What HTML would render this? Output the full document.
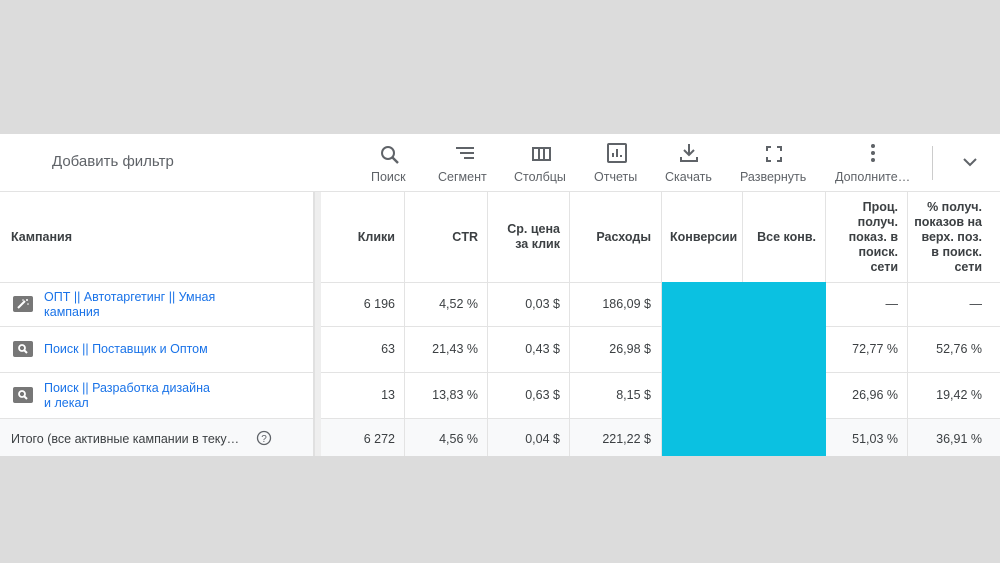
<!DOCTYPE html><html><head><meta charset="utf-8"><style>
body{margin:0;width:1000px;height:563px;background:#dcdcdc;font-family:"Liberation Sans",sans-serif;position:relative;overflow:hidden;color:#3c4043}
.p{position:absolute;left:0;top:134px;width:1000px;height:322px;background:#fff}
.a{position:absolute}
.tb{position:absolute;top:170px;font-size:12.5px;color:#5f6368;text-align:center}
.vl{position:absolute;width:1px;background:#e3e3e3}
.hl{position:absolute;left:0;width:1000px;height:1px;background:#e3e3e3}
.h{position:absolute;font-size:12.5px;font-weight:bold;color:#3c4043;text-align:right;line-height:15px}
.c{position:absolute;font-size:12.5px;color:#3c4043;text-align:right}
.l{position:absolute;font-size:12.5px;color:#1a73e8;line-height:15px}
.ic{position:absolute;left:13px;width:20px;height:16px;background:#777;border-radius:2px}
</style></head><body>
<div class="p"></div>
<div class="a" style="left:52px;top:153px;font-size:15px;color:#5f6368">Добавить фильтр</div>
<svg class="a" style="left:378px;top:143px" width="24" height="24" viewBox="0 0 24 24"><circle cx="10" cy="10" r="6" fill="none" stroke="#5f6368" stroke-width="2"/><path d="M14.5 14.5L20 20" stroke="#5f6368" stroke-width="2.4"/></svg>
<div class="tb" style="left:371px">Поиск</div>
<svg class="a" style="left:453px;top:143px" width="24" height="24" viewBox="0 0 24 24"><path d="M3 5h18M7 10h14M11 15h10" stroke="#5f6368" stroke-width="2"/></svg>
<div class="tb" style="left:438px">Сегмент</div>
<svg class="a" style="left:530px;top:143px" width="24" height="24" viewBox="0 0 24 24"><rect x="3" y="5" width="17" height="12" fill="none" stroke="#5f6368" stroke-width="2"/><path d="M9 5v12M14 5v12" stroke="#5f6368" stroke-width="2"/></svg>
<div class="tb" style="left:514px">Столбцы</div>
<svg class="a" style="left:605px;top:141px" width="24" height="24" viewBox="0 0 24 24"><rect x="3" y="3" width="18" height="18" rx="1" fill="none" stroke="#5f6368" stroke-width="2"/><path d="M8 16v-4M12 16V8M16 16v-2" stroke="#5f6368" stroke-width="2"/></svg>
<div class="tb" style="left:594px">Отчеты</div>
<svg class="a" style="left:677px;top:141px" width="24" height="24" viewBox="0 0 24 24"><path d="M12 3v11M7 9l5 5 5-5M4 16v4h16v-4" fill="none" stroke="#5f6368" stroke-width="2"/></svg>
<div class="tb" style="left:665px">Скачать</div>
<svg class="a" style="left:762px;top:142px" width="24" height="24" viewBox="0 0 24 24"><path d="M5 9V5h4M15 5h4v4M19 15v4h-4M9 19H5v-4" fill="none" stroke="#5f6368" stroke-width="2"/></svg>
<div class="tb" style="left:740px">Развернуть</div>
<svg class="a" style="left:861px;top:141px" width="24" height="24" viewBox="0 0 24 24"><circle cx="12" cy="5" r="2" fill="#5f6368"/><circle cx="12" cy="12" r="2" fill="#5f6368"/><circle cx="12" cy="19" r="2" fill="#5f6368"/></svg>
<div class="tb" style="left:835px">Дополните…</div>
<div class="a" style="left:932px;top:146px;width:1px;height:34px;background:#ccc"></div>
<svg class="a" style="left:958px;top:152px" width="24" height="20" viewBox="0 0 24 20"><path d="M6 7l6 6 6-6" fill="none" stroke="#5f6368" stroke-width="2"/></svg>
<div class="hl" style="top:191px"></div>
<div class="hl" style="top:282px"></div>
<div class="hl" style="top:326px"></div>
<div class="hl" style="top:372px"></div>
<div class="hl" style="top:418px"></div>
<div class="a" style="left:0;top:419px;width:1000px;height:37px;background:#f8f9fa"></div>
<div class="a" style="left:313px;top:192px;width:8px;height:264px;background:#eee;border-left:2px solid #e0e0e0;box-sizing:border-box"></div>
<div class="vl" style="left:404px;top:192px;height:264px"></div>
<div class="vl" style="left:487px;top:192px;height:264px"></div>
<div class="vl" style="left:569px;top:192px;height:264px"></div>
<div class="vl" style="left:661px;top:192px;height:264px"></div>
<div class="vl" style="left:742px;top:192px;height:90px"></div>
<div class="vl" style="left:825px;top:192px;height:264px"></div>
<div class="vl" style="left:907px;top:192px;height:264px"></div>
<div class="a" style="left:662px;top:282px;width:164px;height:174px;background:#0bc1e1"></div>
<div class="h" style="left:11px;top:230px;text-align:left">Кампания</div>
<div class="h" style="right:605px;top:230px">Клики</div>
<div class="h" style="right:522px;top:230px">CTR</div>
<div class="h" style="right:440px;top:222px">Ср. цена<br>за клик</div>
<div class="h" style="right:349px;top:230px">Расходы</div>
<div class="h" style="left:670px;top:230px">Конверсии</div>
<div class="h" style="right:184px;top:230px">Все конв.</div>
<div class="h" style="right:102px;top:200px">Проц.<br>получ.<br>показ. в<br>поиск.<br>сети</div>
<div class="h" style="right:18px;top:200px">% получ.<br>показов на<br>верх. поз.<br>в поиск.<br>сети</div>
<div class="ic" style="top:296px"><svg width="20" height="16"><path d="M5 12l7-7" stroke="#fff" stroke-width="2"/><circle cx="14" cy="4" r="1" fill="#fff"/><circle cx="10" cy="4" r="0.8" fill="#fff"/><circle cx="15" cy="8" r="0.8" fill="#fff"/></svg></div>
<div class="l" style="left:44px;top:290px">ОПТ || Автотаргетинг || Умная<br>кампания</div>
<div class="ic" style="top:341px"><svg width="20" height="16"><circle cx="9" cy="7" r="3" fill="none" stroke="#fff" stroke-width="1.8"/><path d="M11 9l3 3" stroke="#fff" stroke-width="2"/></svg></div>
<div class="l" style="left:44px;top:342px">Поиск || Поставщик и Оптом</div>
<div class="ic" style="top:387px"><svg width="20" height="16"><circle cx="9" cy="7" r="3" fill="none" stroke="#fff" stroke-width="1.8"/><path d="M11 9l3 3" stroke="#fff" stroke-width="2"/></svg></div>
<div class="l" style="left:44px;top:381px">Поиск || Разработка дизайна<br>и лекал</div>
<div class="c" style="left:11px;top:432px;text-align:left">Итого (все активные кампании в теку…</div>
<svg class="a" style="left:256px;top:430px" width="16" height="16"><circle cx="8" cy="8" r="6.5" fill="none" stroke="#5f6368" stroke-width="1.3"/><text x="8" y="12" font-size="10" text-anchor="middle" fill="#5f6368" font-family="Liberation Sans">?</text></svg>
<div class="c" style="right:605px;top:297px">6 196</div><div class="c" style="right:522px;top:297px">4,52 %</div><div class="c" style="right:440px;top:297px">0,03 $</div><div class="c" style="right:349px;top:297px">186,09 $</div><div class="c" style="right:102px;top:297px">—</div><div class="c" style="right:18px;top:297px">—</div>
<div class="c" style="right:605px;top:342px">63</div><div class="c" style="right:522px;top:342px">21,43 %</div><div class="c" style="right:440px;top:342px">0,43 $</div><div class="c" style="right:349px;top:342px">26,98 $</div><div class="c" style="right:102px;top:342px">72,77 %</div><div class="c" style="right:18px;top:342px">52,76 %</div>
<div class="c" style="right:605px;top:388px">13</div><div class="c" style="right:522px;top:388px">13,83 %</div><div class="c" style="right:440px;top:388px">0,63 $</div><div class="c" style="right:349px;top:388px">8,15 $</div><div class="c" style="right:102px;top:388px">26,96 %</div><div class="c" style="right:18px;top:388px">19,42 %</div>
<div class="c" style="right:605px;top:432px">6 272</div><div class="c" style="right:522px;top:432px">4,56 %</div><div class="c" style="right:440px;top:432px">0,04 $</div><div class="c" style="right:349px;top:432px">221,22 $</div><div class="c" style="right:102px;top:432px">51,03 %</div><div class="c" style="right:18px;top:432px">36,91 %</div>
</body></html>
